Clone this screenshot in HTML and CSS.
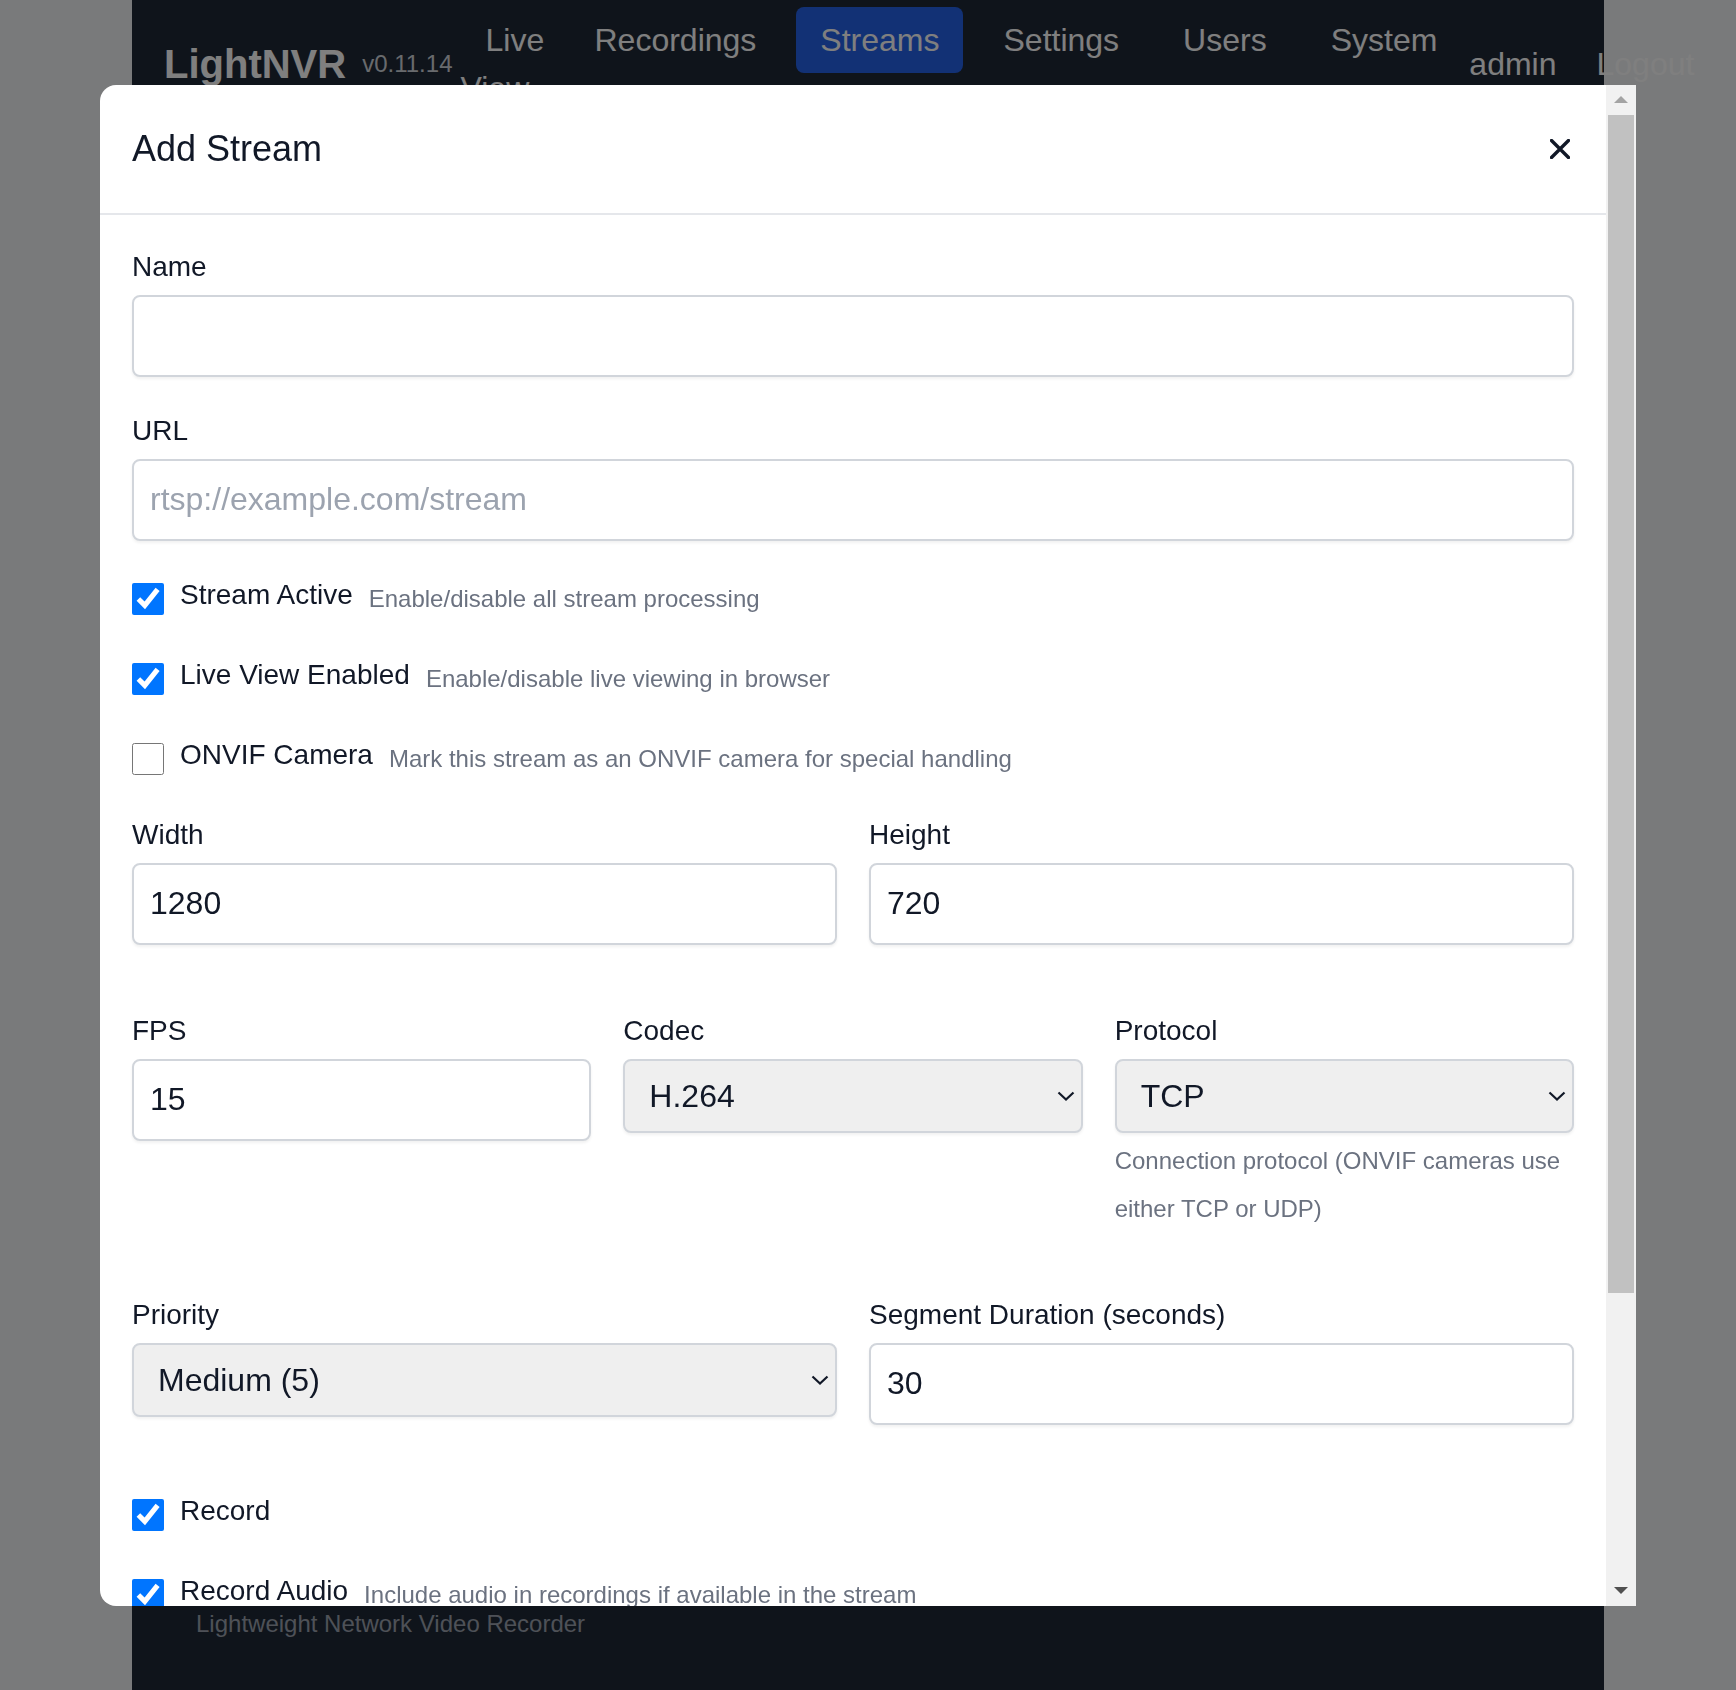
FILE: index.html
```html
<!DOCTYPE html>
<html lang="en">
<head>
<meta charset="utf-8">
<title>LightNVR - Streams</title>
<link rel="stylesheet" href="styles.css">
</head>
<body>
<div class="app">
  <header class="topbar">
    <div class="brand">
      <span class="brand-name">LightNVR</span>
      <span class="brand-version">v0.11.14</span>
    </div>
    <nav class="nav">
      <a class="nav-link nav-link-wrap" href="#">Live View</a>
      <a class="nav-link" href="#">Recordings</a>
      <a class="nav-link active" href="#">Streams</a>
      <a class="nav-link" href="#">Settings</a>
      <a class="nav-link" href="#">Users</a>
      <a class="nav-link" href="#">System</a>
    </nav>
    <div class="user">
      <span class="user-name">admin</span>
      <a class="logout" href="#">Logout</a>
    </div>
  </header>
  <main class="main"></main>
  <footer class="footer">Lightweight Network Video Recorder</footer>
</div>

<div class="overlay">
  <div class="modal">
    <div class="modal-scroll">
      <div class="modal-header">
        <h3 class="modal-title">Add Stream</h3>
        <button class="close-btn" type="button" aria-label="Close">
          <svg width="20" height="20" viewBox="0 0 20 20"><path d="M1.5 1.5 L18.5 18.5 M18.5 1.5 L1.5 18.5" stroke="#111827" stroke-width="3.4" stroke-linecap="round" fill="none"/></svg>
        </button>
      </div>
      <form class="modal-body">
        <div class="group">
          <label class="label" for="name">Name</label>
          <input class="field" id="name" type="text">
        </div>
        <div class="group">
          <label class="label" for="url">URL</label>
          <input class="field" id="url" type="text" placeholder="rtsp://example.com/stream">
        </div>
        <div class="check-row">
          <input class="cb" type="checkbox" id="active" checked>
          <label class="check-label" for="active">Stream Active</label>
          <span class="hint">Enable/disable all stream processing</span>
        </div>
        <div class="check-row">
          <input class="cb" type="checkbox" id="live" checked>
          <label class="check-label" for="live">Live View Enabled</label>
          <span class="hint">Enable/disable live viewing in browser</span>
        </div>
        <div class="check-row">
          <input class="cb" type="checkbox" id="onvif">
          <label class="check-label" for="onvif">ONVIF Camera</label>
          <span class="hint">Mark this stream as an ONVIF camera for special handling</span>
        </div>
        <div class="grid grid-2">
          <div class="group">
            <label class="label" for="width">Width</label>
            <input class="field" id="width" type="number" value="1280">
          </div>
          <div class="group">
            <label class="label" for="height">Height</label>
            <input class="field" id="height" type="number" value="720">
          </div>
        </div>
        <div class="grid grid-3">
          <div class="group">
            <label class="label" for="fps">FPS</label>
            <input class="field" id="fps" type="number" value="15">
          </div>
          <div class="group">
            <label class="label" for="codec">Codec</label>
            <div class="select-wrap">
              <select class="select" id="codec">
                <option>H.264</option>
                <option>H.265</option>
              </select>
              <svg class="chevron" width="18" height="10" viewBox="0 0 18 10"><path d="M1.5 1.5 L9 8.5 L16.5 1.5" stroke="#111827" stroke-width="2.2" fill="none"/></svg>
            </div>
          </div>
          <div class="group">
            <label class="label" for="protocol">Protocol</label>
            <div class="select-wrap">
              <select class="select" id="protocol">
                <option>TCP</option>
                <option>UDP</option>
              </select>
              <svg class="chevron" width="18" height="10" viewBox="0 0 18 10"><path d="M1.5 1.5 L9 8.5 L16.5 1.5" stroke="#111827" stroke-width="2.2" fill="none"/></svg>
            </div>
            <p class="help">Connection protocol (ONVIF cameras use either TCP or UDP)</p>
          </div>
        </div>
        <div class="grid grid-2">
          <div class="group">
            <label class="label" for="priority">Priority</label>
            <div class="select-wrap">
              <select class="select" id="priority">
                <option>Low (1)</option>
                <option selected>Medium (5)</option>
                <option>High (10)</option>
              </select>
              <svg class="chevron" width="18" height="10" viewBox="0 0 18 10"><path d="M1.5 1.5 L9 8.5 L16.5 1.5" stroke="#111827" stroke-width="2.2" fill="none"/></svg>
            </div>
          </div>
          <div class="group">
            <label class="label" for="segment">Segment Duration (seconds)</label>
            <input class="field" id="segment" type="number" value="30">
          </div>
        </div>
        <div class="check-row">
          <input class="cb" type="checkbox" id="record" checked>
          <label class="check-label" for="record">Record</label>
        </div>
        <div class="check-row">
          <input class="cb" type="checkbox" id="audio" checked>
          <label class="check-label" for="audio">Record Audio</label>
          <span class="hint">Include audio in recordings if available in the stream</span>
        </div>
        <div class="check-row">
          <input class="cb" type="checkbox" id="detect">
          <label class="check-label" for="detect">Detection-based Recording</label>
          <span class="hint">Only record when objects are detected</span>
        </div>
        <div class="check-row">
          <input class="cb" type="checkbox" id="backchannel">
          <label class="check-label" for="backchannel">Two-way Audio</label>
          <span class="hint">Enable audio backchannel to the camera</span>
        </div>
      </form>
      <div class="modal-footer">
        <button class="btn btn-secondary" type="button">Test Connection</button>
        <button class="btn btn-secondary" type="button">Cancel</button>
        <button class="btn btn-primary" type="button">Save</button>
      </div>
    </div>
    <div class="scrollbar" aria-hidden="true">
      <span class="sb-btn">
        <svg width="14" height="7" viewBox="0 0 14 7"><path d="M7 0 L14 7 L0 7 Z" fill="#a3a3a3"/></svg>
      </span>
      <span class="sb-track"><span class="sb-thumb"></span></span>
      <span class="sb-btn">
        <svg width="14" height="7" viewBox="0 0 14 7"><path d="M0 0 L14 0 L7 7 Z" fill="#505050"/></svg>
      </span>
    </div>
  </div>
</div>
</body>
</html>
```

FILE: styles.css
```css
* {
  box-sizing: border-box;
}

html, body {
  margin: 0;
  padding: 0;
}

body {
  background: #f3f4f6;
  font-family: "Liberation Sans", Arial, Helvetica, sans-serif;
  color: #111827;
  overflow: hidden;
}

/* ---------- background app ---------- */
.app {
  width: 1472px;
  margin: 0 auto;
  min-height: 100vh;
  background: #1f2937;
  display: flex;
  flex-direction: column;
}

.topbar {
  display: flex;
  align-items: center;
  padding: 7px 32px;
  color: #ffffff;
}

.brand {
  display: flex;
  align-items: center;
  flex-shrink: 0;
}

.brand-name {
  font-size: 40px;
  line-height: 56px;
  font-weight: 700;
}

.brand-version {
  font-size: 24px;
  line-height: 32px;
  margin-left: 16px;
  color: #d1d5db;
}

.nav {
  display: flex;
  align-items: flex-start;
  gap: 16px;
  flex-shrink: 0;
}

.nav-link {
  display: block;
  padding: 9px 24px;
  font-size: 32px;
  line-height: 48px;
  color: #ffffff;
  text-decoration: none;
  border-radius: 8px;
  white-space: nowrap;
  flex-shrink: 0;
}

.nav-link-wrap {
  white-space: normal;
  width: 102px;
  padding-left: 8px;
  text-indent: 25px;
}

.nav-link.active {
  background: #2563eb;
}

.user {
  display: flex;
  align-items: center;
  margin-left: 8px;
  flex-shrink: 0;
  font-size: 32px;
  line-height: 48px;
}

.logout {
  margin-left: 40px;
  color: #ffffff;
  text-decoration: none;
}

.main {
  flex: 1;
}

.footer {
  padding: 0 64px 50px;
  font-size: 24px;
  line-height: 32px;
  color: #9ca3af;
}

/* ---------- overlay + modal ---------- */
.overlay {
  position: fixed;
  inset: 0;
  background: rgba(0, 0, 0, 0.5);
  display: flex;
  align-items: center;
  justify-content: center;
}

.modal {
  width: 1536px;
  height: 90vh;
  display: flex;
  background: #ffffff;
  border-radius: 16px 0 0 16px;
  overflow: hidden;
}

.modal-scroll {
  flex: 1;
  min-width: 0;
  overflow: hidden;
}

/* classic scrollbar column */
.scrollbar {
  width: 30px;
  flex-shrink: 0;
  display: flex;
  flex-direction: column;
  background: #f1f1f1;
}

.sb-btn {
  height: 30px;
  flex-shrink: 0;
  display: flex;
  align-items: center;
  justify-content: center;
}

.sb-track {
  flex: 1;
  display: flex;
  flex-direction: column;
  padding: 0 2px;
}

.sb-thumb {
  height: 1178px;
  background: #c1c1c1;
}

.modal-header {
  display: flex;
  align-items: center;
  justify-content: space-between;
  padding: 32px;
  border-bottom: 2px solid #e5e7eb;
}

.modal-title {
  margin: 0;
  font-size: 36px;
  line-height: 56px;
  font-weight: 400;
  color: #111827;
}

.close-btn {
  width: 28px;
  height: 64px;
  padding: 0;
  border: 0;
  background: transparent;
  display: flex;
  align-items: center;
  justify-content: center;
}

.modal-body {
  padding: 32px;
}

.group {
  margin-bottom: 34px;
}

.label {
  display: block;
  font-size: 28px;
  line-height: 40px;
  margin-bottom: 8px;
  color: #111827;
}

.field {
  display: block;
  width: 100%;
  height: 82px;
  padding: 0 16px;
  font-family: inherit;
  font-size: 32px;
  color: #111827;
  background: #ffffff;
  border: 2px solid #d1d5db;
  border-radius: 8px;
  box-shadow: 0 2px 3px rgba(0, 0, 0, 0.06);
  outline: none;
}

.field::placeholder {
  color: #9ca3af;
}

.field::-webkit-outer-spin-button,
.field::-webkit-inner-spin-button {
  -webkit-appearance: none;
  margin: 0;
}

.select-wrap {
  position: relative;
}

.select {
  display: block;
  width: 100%;
  height: 74px;
  padding: 0 56px 0 24px;
  font-family: inherit;
  font-size: 32px;
  color: #111827;
  background: #efefef;
  border: 2px solid #d1d5db;
  border-radius: 8px;
  box-shadow: 0 2px 3px rgba(0, 0, 0, 0.06);
  -webkit-appearance: none;
  appearance: none;
  outline: none;
}

.chevron {
  position: absolute;
  right: 8px;
  top: 32px;
  pointer-events: none;
}

.help {
  margin: 4px 0 0;
  font-size: 24px;
  line-height: 48px;
  color: #6b7280;
}

.check-row {
  display: flex;
  align-items: center;
  min-height: 48px;
  margin-bottom: 32px;
}

.cb {
  width: 32px;
  height: 32px;
  margin: 0;
  accent-color: #0075ff;
  flex-shrink: 0;
}

.check-label {
  margin-left: 16px;
  margin-bottom: 8px;
  font-size: 28px;
  line-height: 40px;
  color: #111827;
}

.hint {
  margin-left: 16px;
  font-size: 24px;
  line-height: 48px;
  color: #6b7280;
}

.grid {
  display: grid;
  gap: 0 32px;
  margin-bottom: 32px;
}

.grid-2 {
  grid-template-columns: 1fr 1fr;
}

.grid-3 {
  grid-template-columns: 1fr 1fr 1fr;
  margin-bottom: 28px;
}

.modal-footer {
  display: flex;
  justify-content: flex-end;
  gap: 16px;
  padding: 32px;
  border-top: 2px solid #e5e7eb;
}

.btn {
  height: 64px;
  padding: 0 32px;
  font-family: inherit;
  font-size: 28px;
  border-radius: 8px;
  border: 0;
}

.btn-secondary {
  background: #e5e7eb;
  color: #1f2937;
}

.btn-primary {
  background: #2563eb;
  color: #ffffff;
}
```
